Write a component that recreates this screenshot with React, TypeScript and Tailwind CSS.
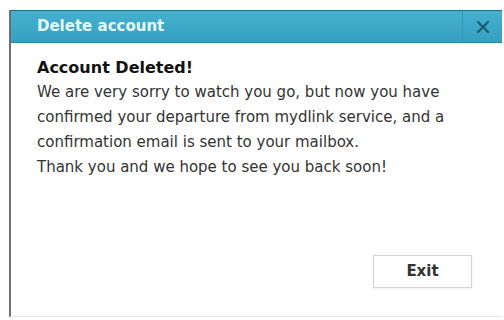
import React from "react";

export default function App() {
  return (
    <div className="w-[504px] h-[320px] overflow-hidden bg-white" style={{ fontFamily: '"DejaVu Sans", Verdana, sans-serif' }}>
      <div className="ml-[9px] mt-[10px] w-[493px] h-[307px] flex flex-col border-l-2 border-l-[#6e6e6e] border-b border-b-[#e4e4e4]">
        <div className="h-[33px] flex items-stretch bg-gradient-to-b from-[#46b0cf] to-[#35a0c2] border-t border-t-[#1d6f88] border-b border-b-[#2b86a3]">
          <div className="flex-1 flex items-center pl-[26px] text-[15px] font-bold text-[#e6fbff]">Delete account</div>
          <div className="w-[40px] border-l border-l-[#3196b4] flex items-center justify-center">
            <svg width="12" height="12" viewBox="0 0 12 12">
              <path d="M1 1 L11 11 M11 1 L1 11" stroke="#1e5a6e" strokeWidth="2.2" strokeLinecap="square" />
            </svg>
          </div>
        </div>
        <div className="flex-1 flex flex-col pl-[26px] pt-[12px] text-[#222]">
          <div className="text-[16px] font-bold leading-[25px] text-[#111]">Account Deleted!</div>
          <div className="text-[15px] leading-[25px] text-[#333]">
            <div>We are very sorry to watch you go, but now you have</div>
            <div>confirmed your departure from mydlink service, and a</div>
            <div>confirmation email is sent to your mailbox.</div>
            <div>Thank you and we hope to see you back soon!</div>
          </div>
          <div className="flex-1" />
          <div className="flex pl-[336px] pb-[28px]">
            <button className="w-[99px] h-[33px] border border-[#d4d4d4] bg-white text-[15px] font-bold text-[#333] shadow-[0_1px_2px_rgba(0,0,0,0.08)]">Exit</button>
          </div>
        </div>
      </div>
    </div>
  );
}
